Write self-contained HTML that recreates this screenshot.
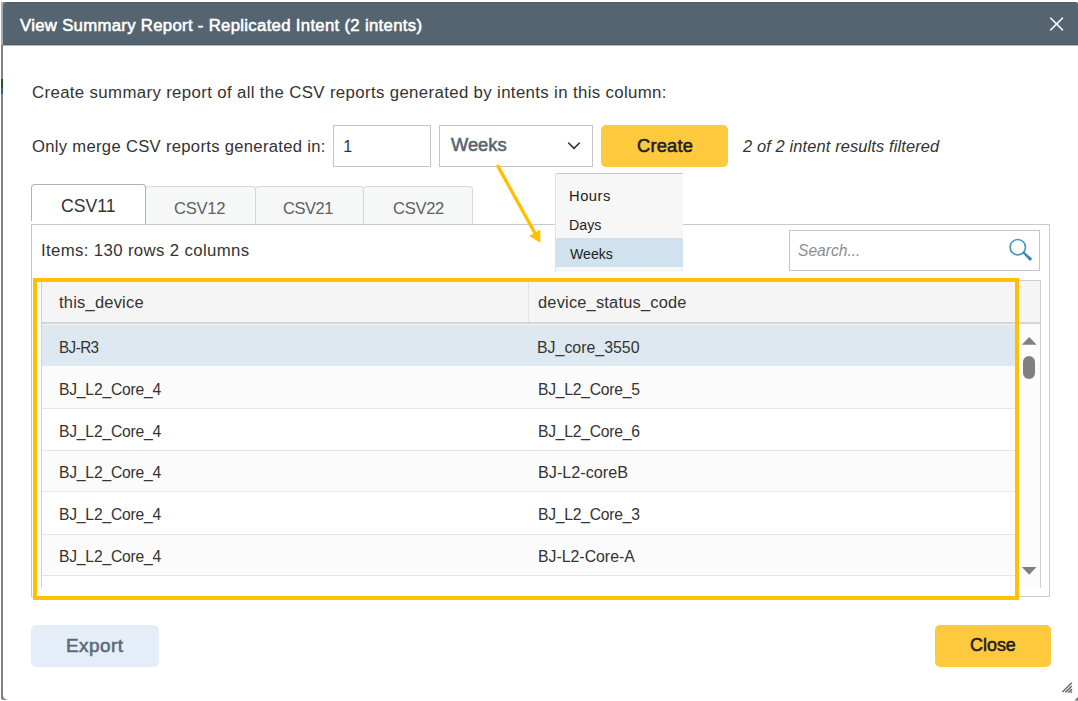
<!DOCTYPE html>
<html lang="en">
<head>
<meta charset="utf-8">
<title>View Summary Report - Replicated Intent (2 intents)</title>
<style>
  html, body { margin: 0; padding: 0; }
  body {
    width: 1078px; height: 701px; position: relative; overflow: hidden;
    background: #ffffff;
    font-family: "Liberation Sans", sans-serif;
    color: #333333;
  }
  .abs { position: absolute; box-sizing: border-box; }
  .t { position: absolute; white-space: nowrap; line-height: 20px; font-size: 16px; color: #333; }
  .b { font-weight: normal; -webkit-text-stroke: 0.55px currentColor; }
  .i { font-style: italic; }

  /* dialog frame */
  #edge { left: 1px; top: 2px; width: 8px; height: 698px; background: #7d8388; border-radius: 2px 0 0 2px; }
  #dialog { left: 3px; top: 2px; width: 1075px; height: 698px; background: #fff; border-radius: 5px 5px 0 5px; }
  #header { left: 3px; top: 2px; width: 1075px; height: 43px; background: #546571; border-radius: 5px 4px 0 0; box-shadow: inset 0 -1px 0 #4b5b66, inset 0 1px 0 #4e5f6a, 0 1px 0 #b4bcc2; }

  /* controls row */
  .box { border: 1px solid #c6c6c6; background: #fff; }
  .btn { border-radius: 5px; }
  .yellow { background: #ffc93e; }

  /* tabs */
  .tab { border: 1px solid #d3d8dc; border-bottom: none; border-radius: 4px 4px 0 0; background: #f6f8f8; }
  .tab.active { background: #fff; border-color: #a9b4bd; }

  /* panel + table */
  #panel { left: 31px; top: 224px; width: 1019px; height: 373px; border: 1px solid #c9c9c9; background: #fff; }
  #table { left: 41px; top: 280px; width: 1000px; height: 308px; border: 1px solid #cfcfcf; border-bottom: none; background: #fff; overflow: hidden; }
  #thead { left: 0; top: 0; width: 998px; height: 41px; background: #f5f5f5; border-bottom: 2px solid #d6d6d6; box-sizing: content-box; }
  .row { left: 0; width: 977px; height: 42px; border-bottom: 1px solid #e6e6e6; background: #fff; }
  .row.alt { background: #fbfbfb; }
  .row.sel { background: #dde8f0; border-bottom-color: #dde8f0; }
  #sbar { left: 977px; top: 43px; width: 21px; height: 265px; background: #fcfcfc; }

  #hl { left: 33px; top: 278px; width: 986px; height: 322px; border: 4px solid #ffc000; }

  /* dropdown */
  #dd { left: 555px; top: 173px; width: 128px; height: 99px; background: #f7f7f7; border-top: 1px solid #c9c9c9; border-left: 1px solid #e3e3e3; border-radius: 3px 0 0 0; }
  #ddsel { left: 555px; top: 238px; width: 128px; height: 29px; background: #cfe2ed; }

  .t { transform-origin: 0 50%; }
  #title { left:20.2px; transform:scaleX(1.0437); letter-spacing:0.31px; }
  #l1 { left:32.2px; transform:scaleX(1.0498); letter-spacing:0.34px; }
  #l2 { left:32.3px; transform:scaleX(1.0394); letter-spacing:0.29px; }
  #one { left:343.3px; }
  #selw { left:451.4px; transform:scaleX(1.0167); }
  #create { left:637px; transform:scaleX(1.0184); letter-spacing:0.19px; }
  #filt { left:742.6px; transform:scaleX(1.0250); letter-spacing:0.13px; }
  #tab1 { left:61.2px; transform:scaleX(0.9805); }
  #tab2 { left:174.3px; transform:scaleX(0.9774); letter-spacing:-0.31px; }
  #tab3 { left:283.4px; transform:scaleX(0.9690); letter-spacing:-0.43px; }
  #tab4 { left:392.5px; transform:scaleX(0.9756); letter-spacing:-0.33px; }
  #items { left:40.8px; transform:scaleX(1.0470); letter-spacing:0.35px; }
  #searchph { left:798.2px; transform:scaleX(0.9747); }
  #h1 { left:59.4px; transform:scaleX(1.0284); letter-spacing:0.22px; }
  #h2 { left:538.2px; transform:scaleX(1.0246); letter-spacing:0.20px; }
  .ca { left:58.6px; transform:scaleX(0.9790); letter-spacing:-0.21px; }
  #r1a { transform:scaleX(0.9500); letter-spacing:-0.57px; }
  .cb { left:537.6px; transform:scaleX(0.9781); letter-spacing:-0.22px; }
  #r1b { left:537.2px; transform:scaleX(0.9933); letter-spacing:0; }
  #r4b { transform:scaleX(1.0120); letter-spacing:0; }
  #r6b { transform:scaleX(0.9894); letter-spacing:0; }
  #dd1 { left:568.9px; transform:scaleX(1.0530); letter-spacing:0.46px; }
  #dd2 { left:569px; transform:scaleX(1.0131); }
  #dd3 { left:570px; transform:scaleX(1.0063); }
  #export { left:66.2px; transform:scaleX(1.0488); letter-spacing:0.47px; }
  #close { left:969.8px; transform:scaleX(0.9955); }
</style>
</head>
<body>
  <div class="abs" id="edge"></div>
  <div class="abs" id="dialog"></div>
  <div class="abs" style="left:1px; top:2px; width:2px; height:43px; background:#a9acaf;"></div>
  <div class="abs" style="left:1073px; top:2px; width:5px; height:6px; background:#b4b4b4;"></div>
  <div class="abs" id="header"></div>
  <div class="abs" style="left:1px; top:79px; width:2px; height:9px; background:#1d5a1d;"></div>
  <div class="abs" style="left:1px; top:88px; width:2px; height:6px; background:#2f5f96;"></div>
  <span class="t b" id="title" style="top:16px; color:#fff;">View Summary Report - Replicated Intent (2 intents)</span>
  <svg class="abs" id="xicon" style="left:1048px; top:16px;" width="17" height="17" viewBox="0 0 17 17"><path d="M2.7 2.1 L14.5 13.9 M14.5 2.1 L2.7 13.9" stroke="#f4f6f7" stroke-width="1.5" fill="none" stroke-linecap="round"/></svg>

  <span class="t" id="l1" style="top:83px;">Create summary report of all the CSV reports generated by intents in this column:</span>
  <span class="t" id="l2" style="top:137px;">Only merge CSV reports generated in:</span>

  <div class="abs box" id="inp" style="left:333px; top:125px; width:98px; height:42px;"></div>
  <span class="t" id="one" style="top:137px;">1</span>

  <div class="abs box" id="sel" style="left:439px; top:125px; width:154px; height:42px;"></div>
  <span class="t b" id="selw" style="top:135px; font-size:18px; color:#546571;">Weeks</span>
  <svg class="abs" id="chev" style="left:566px; top:140px;" width="16" height="12" viewBox="0 0 16 12"><path d="M2.6 3 L8 8.4 L13.4 3" stroke="#333" stroke-width="1.6" fill="none" stroke-linecap="round" stroke-linejoin="round"/></svg>

  <div class="abs btn yellow" id="createbtn" style="left:601px; top:125px; width:127px; height:42px;"></div>
  <span class="t b" id="create" style="top:136px; font-size:18px; color:#1d1d1d;">Create</span>

  <span class="t i" id="filt" style="top:137px;">2 of 2 intent results filtered</span>

  <!-- tabs -->
  <div class="abs tab" style="left:145px; top:186px; width:111px; height:38px;"></div>
  <div class="abs tab" style="left:255px; top:186px; width:109px; height:38px;"></div>
  <div class="abs tab" style="left:363px; top:186px; width:110px; height:38px;"></div>

  <div class="abs tab active" style="left:31px; top:184px; width:115px; height:40px;"></div>
  <div class="abs" id="panel"></div>
  <div class="abs" style="left:31px; top:221px; width:1px; height:3px; background:#fff;"></div>

  <span class="t" id="tab1" style="top:196px; font-size:18px;">CSV11</span>
  <span class="t" id="tab2" style="top:199px; font-size:17px; color:#606060;">CSV12</span>
  <span class="t" id="tab3" style="top:199px; font-size:17px; color:#606060;">CSV21</span>
  <span class="t" id="tab4" style="top:199px; font-size:17px; color:#606060;">CSV22</span>

  <span class="t" id="items" style="top:241px;">Items: 130 rows 2 columns</span>

  <div class="abs box" id="search" style="left:789px; top:230px; width:251px; height:41px;"></div>
  <span class="t i" id="searchph" style="top:241px; color:#8e8e8e;">Search...</span>
  <svg class="abs" id="mag" style="left:1007px; top:238px;" width="28" height="26" viewBox="0 0 28 26"><circle cx="10.8" cy="9.2" r="7.7" stroke="#4f97c6" stroke-width="1.7" fill="none"/><path d="M15.8 15 L17 13.8 L25 20.8 L23 22.8 Z" fill="#3a82b5" stroke="#3a82b5" stroke-width="0.4" stroke-linejoin="round"/></svg>

  <!-- table -->
  <div class="abs" id="table">
    <div class="abs" id="thead"></div>
    <div class="abs" style="left:486px; top:0; width:1px; height:41px; background:#e3e3e3;"></div>
    <div class="abs" style="left:0; top:43px; width:977px; height:1px; background:#eef3f7;"></div>
    <div class="abs row sel" style="top:44px; height:41px;"></div>
    <div class="abs row alt" style="top:85px; height:43px;"></div>
    <div class="abs row" style="top:128px; height:42px;"></div>
    <div class="abs row alt" style="top:170px; height:41px;"></div>
    <div class="abs row" style="top:211px; height:43px;"></div>
    <div class="abs row alt" style="top:254px; height:41px;"></div>
    <div class="abs" id="sbar"></div>
  </div>

  <span class="t" id="h1" style="top:293px;">this_device</span>
  <span class="t" id="h2" style="top:293px;">device_status_code</span>

  <span class="t ca" id="r1a" style="top:338px;">BJ-R3</span>
  <span class="t cb" id="r1b" style="top:338px;">BJ_core_3550</span>
  <span class="t ca" id="r2a" style="top:380px;">BJ_L2_Core_4</span>
  <span class="t cb" id="r2b" style="top:380px;">BJ_L2_Core_5</span>
  <span class="t ca" id="r3a" style="top:422px;">BJ_L2_Core_4</span>
  <span class="t cb" id="r3b" style="top:422px;">BJ_L2_Core_6</span>
  <span class="t ca" id="r4a" style="top:463px;">BJ_L2_Core_4</span>
  <span class="t cb" id="r4b" style="top:463px;">BJ-L2-coreB</span>
  <span class="t ca" id="r5a" style="top:505px;">BJ_L2_Core_4</span>
  <span class="t cb" id="r5b" style="top:505px;">BJ_L2_Core_3</span>
  <span class="t ca" id="r6a" style="top:547px;">BJ_L2_Core_4</span>
  <span class="t cb" id="r6b" style="top:547px;">BJ-L2-Core-A</span>

  <!-- scrollbar -->
  <svg class="abs" style="left:1019px; top:324px;" width="21" height="264" viewBox="0 0 21 264">
    <path d="M2.8 20.8 L10.2 13 L17.7 20.8 Z" fill="#808080"/>
    <rect x="4" y="32" width="12" height="23" rx="6" ry="6" fill="#808080"/>
    <path d="M2.8 243 L17.6 243 L10.2 250.8 Z" fill="#808080"/>
  </svg>

  <!-- highlight rectangle + arrow -->
  <div class="abs" id="hl"></div>

  <!-- dropdown -->
  <div class="abs" id="dd"></div>
  <div class="abs" id="ddsel"></div>
  <span class="t" id="dd1" style="top:186px; font-size:14px; color:#222;">Hours</span>
  <span class="t" id="dd2" style="top:215px; font-size:14px; color:#222;">Days</span>
  <span class="t" id="dd3" style="top:244px; font-size:14px; color:#222;">Weeks</span>

  <svg class="abs" id="arrow" style="left:480px; top:155px;" width="80" height="100" viewBox="0 0 80 100">
    <path d="M17.3 10.1 L56 80" stroke="#ffc000" stroke-width="3.4" fill="none"/>
    <path d="M60.4 87.7 L49.2 80.9 L60.2 74.6 Z" fill="#ffc000"/>
  </svg>

  <!-- footer buttons -->
  <div class="abs btn" id="exportbtn" style="left:31px; top:625px; width:128px; height:42px; background:#e5edf9;"></div>
  <span class="t b" id="export" style="top:636px; font-size:18px; color:#5a6b77;">Export</span>
  <div class="abs btn yellow" id="closebtn" style="left:935px; top:625px; width:116px; height:42px;"></div>
  <span class="t b" id="close" style="top:635px; font-size:18px; color:#1d1d1d;">Close</span>

  <!-- resize grip -->
  <svg class="abs" style="left:1060px; top:681px;" width="18" height="20" viewBox="0 0 18 20">
    <path d="M2.4 11 L11.8 1.8 M5.4 11.4 L11.9 5 M8.4 11.6 L12 8.1 M11 11.8 L12 10.9" stroke="#6a6a6a" stroke-width="1.5" fill="none"/>
    <path d="M14.5 19.5 L18 16 L18 19.5 Z" fill="#6b6b6b"/>
  </svg>
</body>
</html>
